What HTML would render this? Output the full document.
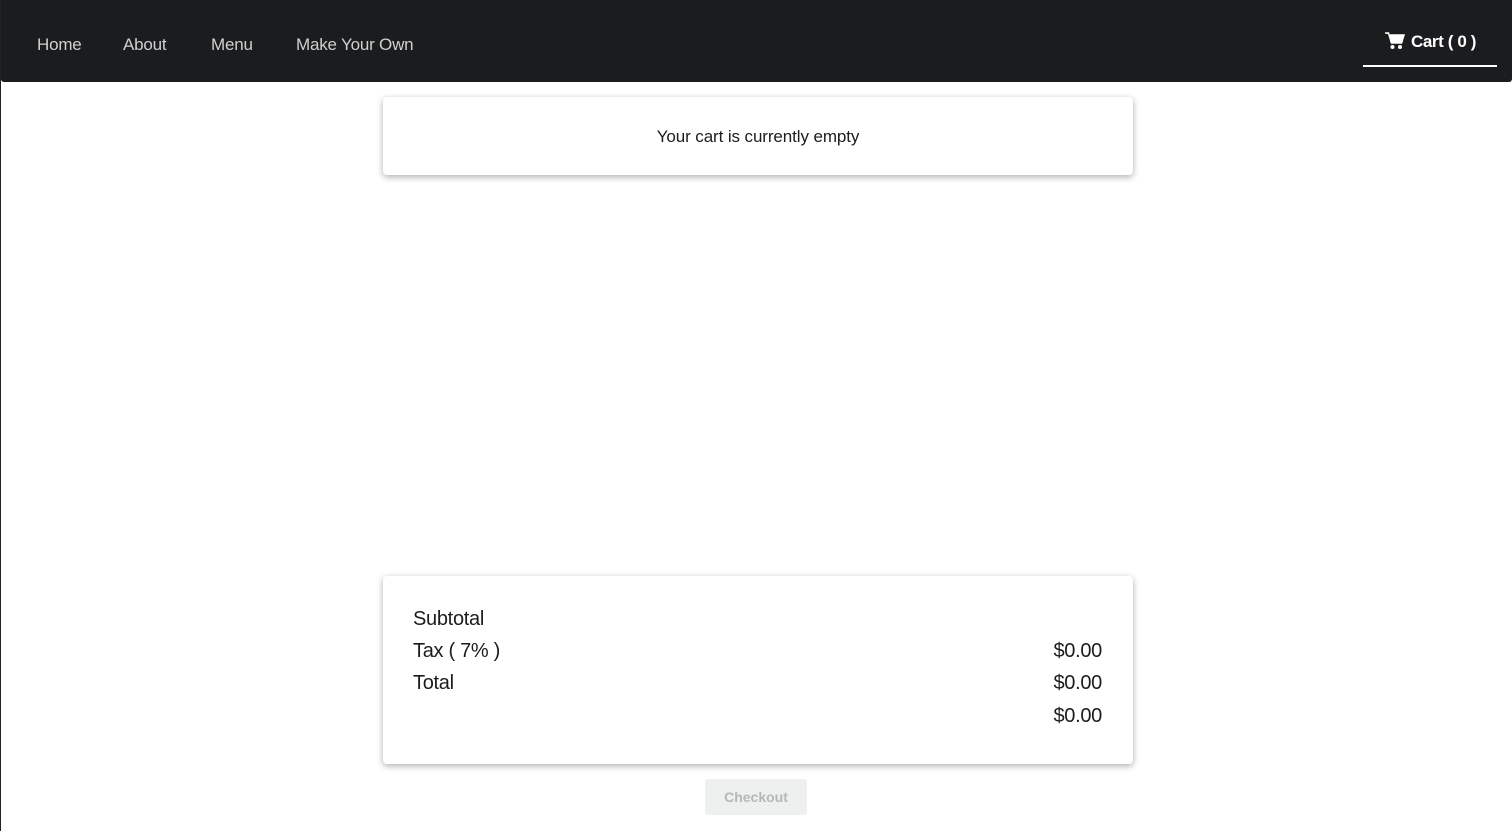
<!DOCTYPE html>
<html><head><style>
body{margin:0;width:1512px;height:831px;background:#fff;font-family:"Liberation Sans",sans-serif;position:relative;overflow:hidden}
.lb{position:absolute;left:0;top:0;width:1px;height:831px;background:#222}
.nav{position:absolute;left:1px;top:0;width:1511px;height:82px;background:#1b1c1e;border-radius:0 0 3px 3px}
.nav a{position:absolute;top:35px;color:#d0d0d0;font-size:17px;letter-spacing:-0.2px}
.cart{position:absolute;left:1362px;top:0;width:134px;height:65px;border-bottom:2px solid #fff;color:#fff;font-weight:bold;font-size:17px}
.card{position:absolute;left:383px;width:750px;background:#fff;border-radius:4px;box-shadow:0 2px 7px rgba(0,0,0,.32)}
.row{position:absolute;font-size:20px;color:#1b1c1e;letter-spacing:-0.3px}
</style></head><body>
<div class="lb"></div>
<div class="nav">
<a style="left:36px">Home</a><a style="left:122px">About</a><a style="left:210px">Menu</a><a style="left:295px">Make Your Own</a>
<div class="cart"><svg style="position:absolute;left:22px;top:32px" width="20" height="18" viewBox="0 0 20 18"><path d="M0 1h3.5l3 10h10l2.5-8H5" fill="#fff" stroke="#fff" stroke-width="1.5"/><rect x="5" y="3" width="13" height="7" fill="#fff"/><circle cx="7.5" cy="15" r="2" fill="#fff"/><circle cx="15" cy="15" r="2" fill="#fff"/></svg><span style="position:absolute;left:48px;top:32px;letter-spacing:-0.4px">Cart ( 0 )</span></div>
</div>
<div class="card" style="top:97px;height:78px"><div style="text-align:center;margin-top:30px;font-size:17px;color:#1b1c1e;letter-spacing:-0.1px">Your cart is currently empty</div></div>
<div class="card" style="top:576px;height:188px">
<div class="row" style="left:30px;top:32px">Subtotal</div>
<div class="row" style="left:30px;top:64px">Tax ( 7% )</div>
<div class="row" style="left:30px;top:96px">Total</div>
<div class="row" style="right:31px;top:64px">$0.00</div>
<div class="row" style="right:31px;top:96px">$0.00</div>
<div class="row" style="right:31px;top:129px">$0.00</div>
</div>
<div style="position:absolute;left:705px;top:779px;width:102px;height:36px;background:#eef0f0;border-radius:3px;color:#b5b7b8;font-size:14px;text-align:center;line-height:36px;font-weight:bold">Checkout</div>
</body></html>
